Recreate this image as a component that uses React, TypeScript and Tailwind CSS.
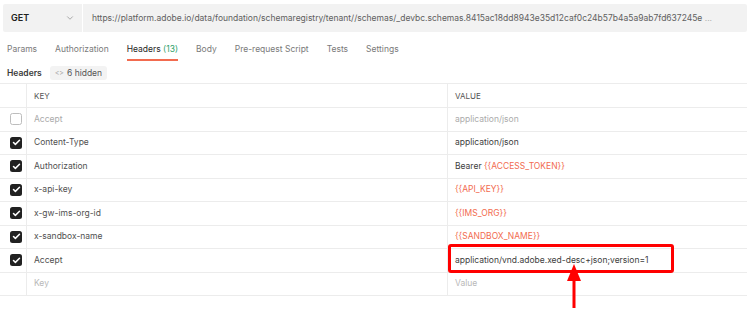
import { ChevronDown, Check } from 'lucide-react';

type Row = { key: string; value: React.ReactNode; on: boolean };

const varCls = 'text-[#f26b4f]';

const rows: Row[] = [
    { key: 'Accept', value: 'application/json', on: false },
    { key: 'Content-Type', value: 'application/json', on: true },
    { key: 'Authorization', value: <>Bearer <span className={ varCls }>{'{{ACCESS_TOKEN}}'}</span></>, on: true },
    { key: 'x-api-key', value: <span className={ varCls }>{'{{API_KEY}}'}</span>, on: true },
    { key: 'x-gw-ims-org-id', value: <span className={ varCls }>{'{{IMS_ORG}}'}</span>, on: true },
    { key: 'x-sandbox-name', value: <span className={ varCls }>{'{{SANDBOX_NAME}}'}</span>, on: true },
    { key: 'Accept', value: 'application/vnd.adobe.xed-desc+json;version=1', on: true },
];

const tabs = ['Params', 'Authorization', 'Headers', 'Body', 'Pre-request Script', 'Tests', 'Settings'];

function Checkbox({ on }: { on: boolean }) {
    if (!on) return <div className="h-[12px] w-[12px] rounded-[2.5px] border border-[#bdbdbd] bg-white" />;
    return (
        <div className="flex h-[12px] w-[12px] items-center justify-center rounded-[2.5px] bg-[#212121]">
            <Check size={ 9 } strokeWidth={ 4 } className="text-white" />
        </div>
    );
}

export default function App() {
    return (
        <div className="relative h-[312px] w-[750px] overflow-hidden bg-white text-[8.5px] text-[#505050]" style={ { fontFamily: 'Inter, "Noto Sans", sans-serif' } }>
            {/* url bar */}
            <div className="ml-[3px] mt-[4px] flex h-[28px] w-[744px] items-center rounded-[2px] bg-[#f2f2f2]">
                <div className="flex h-full w-[80px] items-center justify-between border-r border-white pl-[8px] pr-[7px]">
                    <span className="text-[9px] font-semibold text-[#212121]">GET</span>
                    <ChevronDown size={ 10 } className="text-[#9a9a9a]" />
                </div>
                <div className="flex-1 truncate pl-[9px] text-[#606060]">
                    https://platform.adobe.io/data/foundation/schemaregistry/tenant//schemas/_devbc.schemas.8415ac18dd8943e35d12caf0c24b57b4a5a9ab7fd637245e<span className="text-[#b0b0b0]"> ...</span>
                </div>
            </div>

            {/* tabs */}
            <div className="mt-[10px] flex h-[20px] items-start gap-[18px] pl-[7px] text-[#7a7a7a]">
                { tabs.map((t) => (
                    t === 'Headers' ? (
                        <div key={ t } className="flex flex-col">
                            <span className="leading-[14px] text-[#262626]">Headers <span className="text-[#2e9f6a]">(13)</span></span>
                            <div className="mt-[3px] h-[2px] bg-[#f26b4f]" />
                        </div>
                    ) : (
                        <span key={ t } className="leading-[14px]">{ t }</span>
                    )
                )) }
            </div>

            {/* headers meta */}
            <div className="mt-[2px] flex h-[18px] items-center gap-[8px] pl-[7px]">
                <span className="font-semibold text-[#3a3a3a]">Headers</span>
                <span className="flex items-center gap-[3px] rounded-[3px] bg-[#f3f3f3] px-[5px] py-[1px] text-[#555]">
                    <span className="text-[7px] text-[#999]">{'<>'}</span> 6 hidden
                </span>
            </div>

            {/* table */}
            <div className="mt-[1px] w-[747px] border-t border-[#ececec]">
                <div className="flex h-[24px] items-center border-b border-[#ececec] text-[8px] text-[#555]">
                    <div className="h-full w-[27px] border-r border-[#ececec]" />
                    <div className="flex h-full w-[421px] items-center border-r border-[#ececec] pl-[7px]">KEY</div>
                    <div className="pl-[7px]">VALUE</div>
                </div>
                { rows.map((r, i) => (
                    <div key={ i } className="flex h-[23.5px] items-center border-b border-[#ececec]">
                        <div className="flex h-full w-[27px] items-center justify-center border-r border-[#ececec] pl-[6px]">
                            <Checkbox on={ r.on } />
                        </div>
                        <div className={ 'flex h-full w-[421px] items-center border-r border-[#ececec] pl-[7px] ' + (r.on ? 'text-[#505050]' : 'text-[#ababab]') }>{ r.key }</div>
                        <div className={ 'pl-[7px] ' + (r.on ? 'text-[#404040]' : 'text-[#ababab]') }>{ r.value }</div>
                    </div>
                )) }
                <div className="flex h-[23.5px] items-center border-b border-[#ececec] text-[#b8b8b8]">
                    <div className="h-full w-[27px] border-r border-[#ececec]" />
                    <div className="flex h-full w-[421px] items-center border-r border-[#ececec] pl-[7px]">Key</div>
                    <div className="pl-[7px]">Value</div>
                </div>
            </div>

            {/* highlight */}
            <div className="absolute left-[448px] top-[244px] h-[29px] w-[226px] rounded-[3px] border-[3.5px] border-[#ff0000]" />
            <svg className="absolute left-[565px] top-[263px]" width="18" height="48" viewBox="0 0 18 48">
                <path d="M9 1 L16 18 L2 18 Z" fill="#ff0000" />
                <rect x="7.5" y="16" width="3" height="29" fill="#ff0000" />
            </svg>
        </div>
    );
}
